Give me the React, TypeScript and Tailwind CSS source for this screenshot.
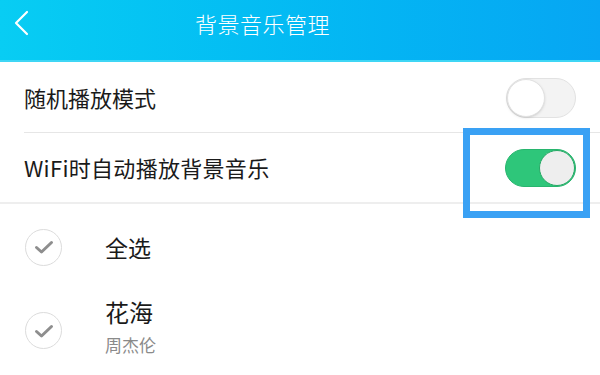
import React from "react";

const font = { fontFamily: '"Noto Sans CJK SC", "Noto Sans", sans-serif' };

function Check() {
  return (
    <div className="w-[37px] h-[37px] rounded-full border-[1.5px] border-[#dcdcdc] flex items-center justify-center">
      <svg width="20" height="16" viewBox="0 0 20 16" fill="none">
        <path d="M2.5 8.5 L7.5 13 L17.5 3.5" stroke="#8e8e8e" strokeWidth="3" strokeLinecap="round" strokeLinejoin="round" />
      </svg>
    </div>
  );
}

export default function App() {
  return (
    <div className="w-[600px] h-[375px] bg-white overflow-hidden relative" style={font}>
      <div className="h-[62px] bg-gradient-to-r from-[#08cdf3] to-[#07a6f3] border-b-2 border-[#3fd6f5] flex items-start relative">
        <svg className="absolute left-[13px] top-[10px]" width="18" height="26" viewBox="0 0 18 26" fill="none">
          <path d="M14 2 L3 13 L14 24" stroke="white" strokeWidth="2.2" strokeLinecap="round" strokeLinejoin="round" />
        </svg>
        <div className="ml-[195px] mt-[10px] text-white text-[22px] leading-[26px] font-light tracking-[0.5px]">背景音乐管理</div>
      </div>
      <div className="pl-[24px]">
        <div className="h-[71px] flex items-center justify-between border-b border-[#e6e6e6] pr-[24px]">
          <span className="text-[22px] text-[#1a1a1a]">随机播放模式</span>
          <div className="w-[70px] h-[40px] rounded-full bg-[#f3f3f3] border border-[#e2e2e2] relative mt-[2px]">
            <div className="absolute left-[0px] top-[0px] w-[38px] h-[38px] rounded-full bg-white border border-[#e2e2e2] shadow-sm"></div>
          </div>
        </div>
      </div>
      <div className="h-[71px] flex items-center justify-between border-b-2 border-[#eeeeee] pl-[24px] pr-[24px]">
        <span className="text-[22px] text-[#1a1a1a] tracking-[0.3px]">WiFi时自动播放背景音乐</span>
        <div className="w-[71px] h-[38px] rounded-full bg-[#2ec67a] relative border border-[#28b56e]">
          <div className="absolute right-[0px] top-[0px] w-[36px] h-[36px] rounded-full bg-[#eeeeee] border border-[#26a865]"></div>
        </div>
      </div>
      <div className="pl-[25px] pt-[24px] flex flex-col">
        <div className="flex items-center h-[38px]">
          <Check />
          <span className="ml-[43px] text-[23px] text-[#1a1a1a]">全选</span>
        </div>
        <div className="flex items-start mt-[19px]">
          <div className="mt-[27px]"><Check /></div>
          <div className="ml-[43px] mt-[12px] flex flex-col">
            <span className="text-[24px] text-[#1a1a1a] leading-[30px]">花海</span>
            <span className="text-[17px] text-[#8a8a8a] leading-[22px] mt-[7px]">周杰伦</span>
          </div>
        </div>
      </div>
      <div className="absolute left-[463px] top-[128px] w-[127px] h-[90px] border-[7px] border-[#3aa1f4]"></div>
    </div>
  );
}
